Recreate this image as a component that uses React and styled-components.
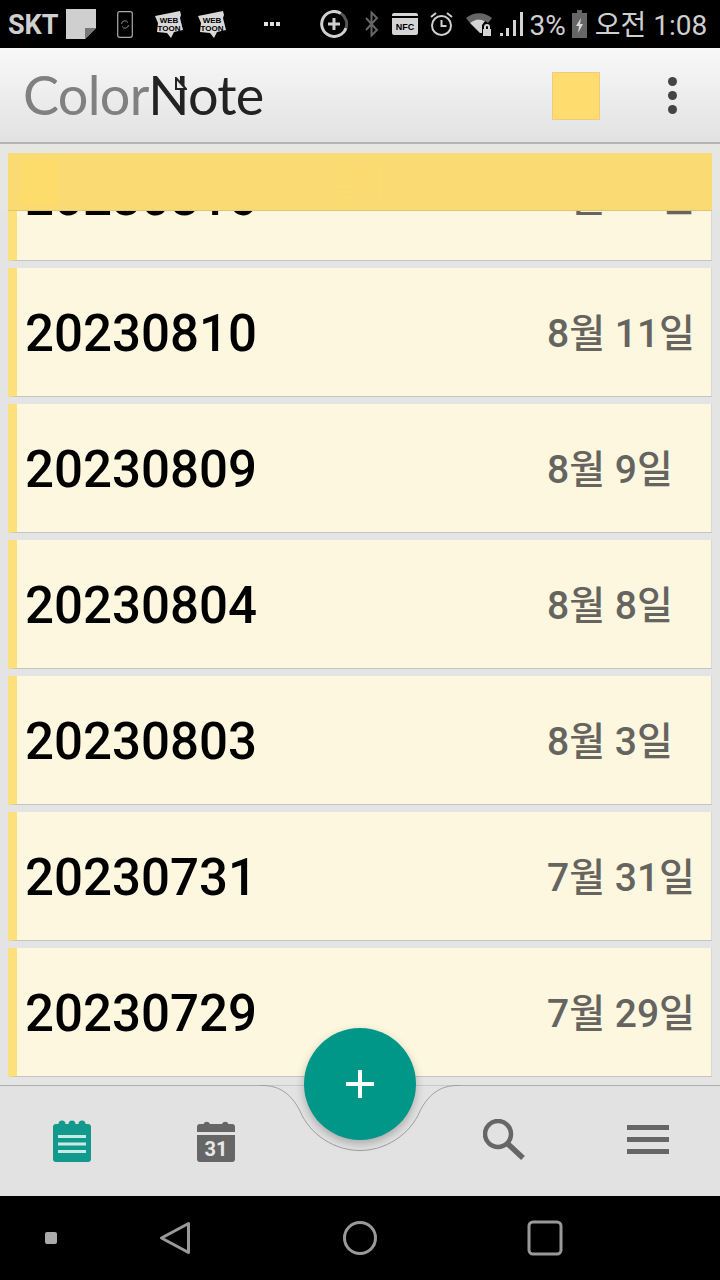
import React from 'react'
import styled, { createGlobalStyle } from 'styled-components'

const notes = [
    { title: '20230816', date: '8월 16일' },
    { title: '20230810', date: '8월 11일' },
    { title: '20230809', date: '8월 9일' },
    { title: '20230804', date: '8월 8일' },
    { title: '20230803', date: '8월 3일' },
    { title: '20230731', date: '7월 31일' },
    { title: '20230729', date: '7월 29일' },
]

const GlobalStyle = createGlobalStyle`
    html, body {
        margin: 0;
        padding: 0;
        background: #000;
    }
`

const Screen = styled.div`
    width: 720px;
    height: 1280px;
    display: flex;
    flex-flow: column nowrap;
    overflow: hidden;
    font-family: Roboto, 'Noto Sans CJK KR', sans-serif;
`

const StatusBar = styled.div`
    flex: 0 0 48px;
    display: flex;
    align-items: center;
    padding: 0 12px 0 8px;
    background: #000;
    color: #cfcfcf;
`

const Carrier = styled.span`
    font-size: 27px;
    font-weight: 700;
    margin-right: 7px;
    padding-top: 2px;
`

const StatusIcon = styled.svg`
    flex: none;
    display: block;
    margin-left: ${props => props.$left || 0}px;
`

const WebtoonText = styled.text`
    font-family: 'Liberation Sans', sans-serif;
    font-size: 8px;
    font-weight: 700;
    fill: #000;
    text-anchor: middle;
`

const NfcText = styled.text`
    font-family: 'Liberation Sans', sans-serif;
    font-size: 9px;
    font-weight: 700;
    fill: #000;
    text-anchor: middle;
`

const StatusText = styled.span`
    flex: none;
    font-size: 28px;
    line-height: 44px;
    padding-top: 4px;
    margin-left: ${props => props.$left || 0}px;
`

const Header = styled.header`
    flex: 0 0 96px;
    box-sizing: border-box;
    display: flex;
    align-items: center;
    padding: 0 0 0 23px;
    background: linear-gradient(#f8f8f8, #e2e2e2);
    border-bottom: 2px solid #b4b4b4;
`

const Logo = styled.div`
    position: relative;
    flex: 1;
    font-family: Lato, sans-serif;
    font-weight: 400;
    font-size: 54px;
    line-height: 90px;
    letter-spacing: -0.7px;
    color: #808080;

    span {
        color: #222;
    }
`

const LogoFold = styled.svg`
    position: absolute;
    left: 152px;
    top: 27px;
`

const ColorSwatch = styled.div`
    width: 48px;
    height: 48px;
    box-sizing: border-box;
    background: #fedc6e;
    border: 1px solid #e6cf80;
    margin: 2px 68px 0 0;
`

const MoreDots = styled.div`
    display: flex;
    flex-flow: column nowrap;
    gap: 5px;
    margin-right: 43px;

    i {
        display: block;
        width: 9px;
        height: 9px;
        border-radius: 50%;
        background: #444;
    }
`

const ListArea = styled.main`
    position: relative;
    flex: 1;
    min-height: 0;
    overflow: hidden;
    background: #e4e4e4;
`

const NoteList = styled.div`
    display: flex;
    flex-flow: column nowrap;
    gap: 7px;
    margin-top: -12px;
    padding: 0 8px;
`

const NoteCard = styled.div`
    flex: 0 0 129px;
    box-sizing: border-box;
    display: flex;
    align-items: center;
    padding-left: 8px;
    background: #fcf7de;
    border-left: 9px solid #fce07c;
    border-right: 1px solid #d8d8d0;
    border-bottom: 1px solid #c4c4c0;
`

const NoteTitle = styled.div`
    flex: 1;
    font-size: 51px;
    font-weight: 500;
    color: #000;
    padding-top: 2px;
`

const NoteDate = styled.div`
    flex: 0 0 164px;
    font-size: 39px;
    font-weight: 500;
    color: #666460;
    padding-bottom: 4px;
`

const StickyHead = styled.div`
    position: absolute;
    left: 0;
    right: 0;
    top: 0;
    padding: 9px 8px 0;
    background: #e6e6e2;
`

const CategoryBar = styled.div`
    height: 58px;
    box-sizing: border-box;
    display: flex;
    align-items: center;
    background: #f9da73;
    border-bottom: 1px solid #e0c470;
`

const CategorySwatch = styled.div`
    width: 38px;
    height: 46px;
    margin-left: 12px;
    background: #fedc6c;
`

const CategoryName = styled.div`
    margin-left: 272px;
    font-size: 30px;
    font-weight: 500;
    color: #fbdc70;
`

const BottomBar = styled.nav`
    position: relative;
    flex: 0 0 111px;
    box-sizing: border-box;
    display: grid;
    grid-template-columns: repeat(5, 1fr);
    align-items: center;
    justify-items: center;
    padding-bottom: 2px;
    background: #e2e2e2;
    border-top: 1px solid #aeaeae;
`

const Notch = styled.svg`
    position: absolute;
    left: 260px;
    top: -1px;
`

const Fab = styled.button`
    position: absolute;
    left: 304px;
    top: -58px;
    width: 112px;
    height: 112px;
    padding: 0;
    border: 0;
    border-radius: 50%;
    background: #009688;
    box-shadow: 0 4px 10px rgba(0, 0, 0, 0.25);
    display: flex;
    align-items: center;
    justify-content: center;
`

const CalendarDay = styled.text`
    font-family: Roboto, sans-serif;
    font-size: 20px;
    font-weight: 700;
    fill: #e8e8e8;
    text-anchor: middle;
`

const SystemNav = styled.div`
    flex: 0 0 84px;
    display: flex;
    align-items: center;
    background: #000;
`

const SystemIcon = styled.svg`
    flex: none;
    display: block;
    margin-left: ${props => props.$left}px;
`

const NoteIcon = () => (
    <svg width="38" height="43" viewBox="0 0 38 43">
        <path d="M3 5h2.5a3.5 3.5 0 0 1 7 0h3a3.5 3.5 0 0 1 7 0h3a3.5 3.5 0 0 1 7 0H35a3 3 0 0 1 3 3v32a3 3 0 0 1-3 3H3a3 3 0 0 1-3-3V8a3 3 0 0 1 3-3z" fill="#12998b" />
        <path d="M5 17.5h28M5 25h28M5 32.500h28" stroke="#c4ece6" strokeWidth="3" />
    </svg>
)

const CalendarIcon = () => (
    <svg width="38" height="43" viewBox="0 0 38 43">
        <path d="M3 5h3.500a3.500 3.500 0 0 1 6.500 0h12a3.500 3.500 0 0 1 6.500 0H35a3 3 0 0 1 3 3v5H0V8a3 3 0 0 1 3-3z" fill="#666" />
        <path d="M0 16h38v24a3 3 0 0 1-3 3H3a3 3 0 0 1-3-3z" fill="#666" />
        <CalendarDay x="19" y="37">31</CalendarDay>
    </svg>
)

const SearchIcon = () => (
    <svg width="42" height="42" viewBox="0 0 42 42">
        <circle cx="15" cy="15" r="13" fill="none" stroke="#666" strokeWidth="4.500" />
        <path d="M25 25l15 14" stroke="#666" strokeWidth="5.500" />
    </svg>
)

const MenuIcon = () => (
    <svg width="42" height="30" viewBox="0 0 42 30">
        <path d="M0 2.500h42M0 14.500h42M0 26.500h42" stroke="#666" strokeWidth="5" />
    </svg>
)

const WebtoonIcon = ({ left }) => (
    <StatusIcon $left={left} width="30" height="29" viewBox="0 0 30 29">
        <path d="M1 6l25-5 1 4-1 3 3 12-9 2-3 6-4-5-10-1 1-9z" fill="#d8d8d8" />
        <WebtoonText x="15" y="13">WEB</WebtoonText>
        <WebtoonText x="15" y="21">TOON</WebtoonText>
    </StatusIcon>
)

const StatusIcons = () => (
    <>
        <Carrier>SKT</Carrier>
        <StatusIcon width="30" height="30" viewBox="0 0 30 30">
            <path d="M0 0h30v19L19 30H0z" fill="#cfcfcf" />
            <path d="M19 30V19h11z" fill="#777" />
        </StatusIcon>
        <StatusIcon $left={21} width="16" height="27" viewBox="0 0 16 27">
            <rect x="0.700" y="0.700" width="14.600" height="25.600" rx="2" fill="none" stroke="#aaa" strokeWidth="1.200" />
            <path d="M4.500 13a3.500 3.500 0 0 1 6.500-1.500M11.500 14a3.500 3.500 0 0 1-6.500 1.500" fill="none" stroke="#888" strokeWidth="1" />
        </StatusIcon>
        <WebtoonIcon left={21} />
        <WebtoonIcon left={13} />
        <StatusIcon $left={37} width="16" height="4" viewBox="0 0 16 4">
            <path d="M0 0h4v4H0zM6 0h4v4H6zM12 0h4v4h-4z" fill="#e0e0e0" />
        </StatusIcon>
        <StatusIcon $left={40} width="28" height="28" viewBox="0 0 28 28">
            <path d="M21 3.500A12.500 12.500 0 1 0 26 18" fill="none" stroke="#d0d0d0" strokeWidth="3" />
            <path d="M21 3.500A12.500 12.500 0 0 1 26 18" fill="none" stroke="#555" strokeWidth="3" />
            <path d="M14 8v12M8 14h12" stroke="#d0d0d0" strokeWidth="3" />
        </StatusIcon>
        <StatusIcon $left={16} width="16" height="26" viewBox="0 0 16 26">
            <path d="M2 7l11 12-5.500 5.500v-23L13 7 2 19" fill="none" stroke="#666" strokeWidth="2" />
        </StatusIcon>
        <StatusIcon $left={12} width="26" height="22" viewBox="0 0 26 22">
            <path d="M2 0h22a2 2 0 0 1 2 2v1H0V2a2 2 0 0 1 2-2zM0 5h26v15a2 2 0 0 1-2 2H2a2 2 0 0 1-2-2z" fill="#d4d4d4" />
            <NfcText x="13" y="17">NFC</NfcText>
        </StatusIcon>
        <StatusIcon $left={12} width="23" height="24" viewBox="0 0 23 24">
            <circle cx="11.500" cy="13.500" r="9.500" fill="none" stroke="#d0d0d0" strokeWidth="2" />
            <path d="M11.500 8v6h5M1 5l5-4M22 5l-5-4" fill="none" stroke="#d0d0d0" strokeWidth="2" />
        </StatusIcon>
        <StatusIcon $left={13} width="26" height="24" viewBox="0 0 26 24">
            <path d="M0 6a20 20 0 0 1 26 0l-4 5a14 14 0 0 0-18 0z" fill="#666" />
            <path d="M4 11a14 14 0 0 1 15-2l-3 4v8h-2z" fill="#d4d4d4" />
            <path d="M18 15a3 3 0 0 1 6 0v2h1v7h-8v-7h1zM20 15v2h2v-2a1 1 0 0 0-2 0z" fill="#d4d4d4" fillRule="evenodd" />
        </StatusIcon>
        <StatusIcon $left={8} width="23" height="24" viewBox="0 0 23 24">
            <path d="M0 24h3v-3H0zM6 24h3v-8H6zM13 24h3V8h-3zM20 24h3V0h-3z" fill="#d4d4d4" />
        </StatusIcon>
        <StatusText $left={7}>3%</StatusText>
        <StatusIcon $left={6} width="15" height="28" viewBox="0 0 15 28">
            <path d="M5 0h5v3h5v25H0V3h5z" fill="#666" />
            <path d="M9 8l-5 8h3l-1 7 5-9H8z" fill="#d8d8d8" />
        </StatusIcon>
        <StatusText $left={8}>오전</StatusText>
        <StatusText $left={7}>1:08</StatusText>
    </>
)

const App = () => (
    <Screen>
        <GlobalStyle />
        <StatusBar>
            <StatusIcons />
        </StatusBar>
        <Header>
            <Logo>
                Color<span>Note</span>
                <LogoFold width="12" height="14" viewBox="0 0 12 14">
                    <path d="M1 1l10 11H1z" fill="#e8e8e8" stroke="#222" strokeWidth="2" />
                </LogoFold>
            </Logo>
            <ColorSwatch />
            <MoreDots>
                <i />
                <i />
                <i />
            </MoreDots>
        </Header>
        <ListArea>
            <NoteList>
                {notes.map(note => (
                    <NoteCard key={note.title}>
                        <NoteTitle>{note.title}</NoteTitle>
                        <NoteDate>{note.date}</NoteDate>
                    </NoteCard>
                ))}
            </NoteList>
            <StickyHead>
                <CategoryBar>
                    <CategorySwatch />
                    <CategoryName>일기</CategoryName>
                </CategoryBar>
            </StickyHead>
        </ListArea>
        <BottomBar>
            <NoteIcon />
            <CalendarIcon />
            <span />
            <SearchIcon />
            <MenuIcon />
            <Notch width="200" height="70" viewBox="0 0 200 70">
                <path d="M0 .5h3C20 .5 32 10 40 26 50 50 75 65.500 100 65.500S150 50 160 26C168 10 180 .5 197 .5h3" fill="#e3e3e3" stroke="#a0a0a0" strokeWidth="1" />
            </Notch>
            <Fab aria-label="add">
                <svg width="28" height="28" viewBox="0 0 28 28">
                    <path d="M14 0v28M0 14h28" stroke="#fff" strokeWidth="4" />
                </svg>
            </Fab>
        </BottomBar>
        <SystemNav>
            <SystemIcon $left={44} width="14" height="14" viewBox="0 0 14 14">
                <rect x="1" y="1" width="12" height="12" rx="2" fill="#aaa" />
            </SystemIcon>
            <SystemIcon $left={100} width="34" height="36" viewBox="0 0 34 36">
                <path d="M30.500 3.500v29L3.500 18z" fill="none" stroke="#999" strokeWidth="3" strokeLinejoin="round" />
            </SystemIcon>
            <SystemIcon $left={150} width="36" height="36" viewBox="0 0 36 36">
                <circle cx="18" cy="18" r="15.500" fill="none" stroke="#999" strokeWidth="3" />
            </SystemIcon>
            <SystemIcon $left={149} width="36" height="36" viewBox="0 0 36 36">
                <rect x="2" y="2" width="32" height="32" rx="4" fill="none" stroke="#999" strokeWidth="3" />
            </SystemIcon>
        </SystemNav>
    </Screen>
)

export default App
